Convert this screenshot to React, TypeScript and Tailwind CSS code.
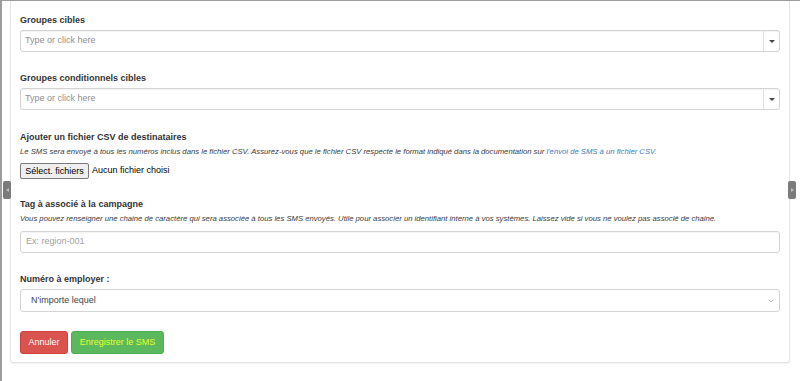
import { ChevronDown } from "lucide-react";

const font = { fontFamily: '"Liberation Sans", Arial, sans-serif' };

function Label({ children }: { children: React.ReactNode }) {
  return <div className="text-[9px] leading-[13px] font-bold text-[#333]">{children}</div>;
}

function TagInput() {
  return (
    <div className="mt-[3px] flex h-[22px] w-full rounded-[3px] border border-[#d4d4d4] bg-white shadow-[inset_0_1px_1px_rgba(0,0,0,0.05)]">
      <div className="flex flex-1 items-center pl-[4px] text-[9px] text-[#8f8f8f]">Type or click here</div>
      <div className="flex w-[16px] items-center justify-center border-l border-[#e0e0e0]">
        <div className="h-0 w-0 border-x-[3px] border-t-[3px] border-x-transparent border-t-[#444]" />
      </div>
    </div>
  );
}

export default function App() {
  return (
    <div style={font} className="relative h-[381px] w-[800px] overflow-hidden border-l-2 border-t border-[#9c9c9c] bg-white">
      <div className="ml-[8px] w-[780px] rounded-b-[3px] border-x border-b border-[#e4e4e4] bg-white px-[9px] pb-[8px] pt-[13px] shadow-[0_1px_1px_rgba(0,0,0,0.04)]">
        {/* Groupes cibles */}
        <Label>Groupes cibles</Label>
        <TagInput />

        {/* Groupes conditionnels */}
        <div className="mt-[20px]">
          <Label>Groupes conditionnels cibles</Label>
          <TagInput />
        </div>

        {/* CSV */}
        <div className="mt-[21px]">
          <Label>Ajouter un fichier CSV de destinataires</Label>
          <p className="mt-[2px] text-[7.7px] leading-[11px] italic text-[#3a3a3a]">
            Le SMS sera envoyé à tous les numéros inclus dans le fichier CSV. Assurez-vous que le fichier CSV respecte le format indiqué dans la documentation sur{" "}
            <span className="text-[#3a7cc0]">l'envoi de SMS à un fichier CSV.</span>
          </p>
          <div className="mt-[6px] flex items-center">
            <button className="h-[16px] w-[69px] rounded-[2px] border border-[#7a7a7a] bg-[#efefef] text-[9px] leading-[14px] text-black">
              Sélect. fichiers
            </button>
            <span className="ml-[3px] text-[9px] text-black">Aucun fichier choisi</span>
          </div>
        </div>

        {/* Tag */}
        <div className="mt-[19px]">
          <Label>Tag à associé à la campagne</Label>
          <p className="mt-[2px] text-[7.7px] leading-[11px] italic text-[#3a3a3a]">
            Vous pouvez renseigner une chaine de caractère qui sera associée à tous les SMS envoyés. Utile pour associer un identifiant interne à vos systèmes. Laissez vide si vous ne voulez pas associé de chaine.
          </p>
          <div className="mt-[7px] flex h-[22px] items-center rounded-[3px] border border-[#d4d4d4] pl-[5px] text-[9px] text-[#a0a0a0] shadow-[inset_0_1px_1px_rgba(0,0,0,0.05)]">
            Ex: region-001
          </div>
        </div>

        {/* Numéro */}
        <div className="mt-[20px]">
          <Label>Numéro à employer :</Label>
          <div className="mt-[3px] flex h-[23px] items-center justify-between rounded-[3px] border border-[#d4d4d4] pl-[10px] pr-[4px] text-[9px] text-[#444]">
            <span>N'importe lequel</span>
            <ChevronDown size={8} strokeWidth={1.5} className="text-[#777]" />
          </div>
        </div>

        {/* Buttons */}
        <div className="mt-[19px] flex gap-[3px]">
          <button className="h-[23px] w-[48px] rounded-[3px] border border-[#d43f3a] bg-[#d9534f] text-[9px] text-white">Annuler</button>
          <button className="h-[23px] w-[93px] rounded-[3px] border border-[#4cae4c] bg-[#5cb85c] text-[9px] text-[#e4ff2e]">Enregistrer le SMS</button>
        </div>
      </div>

      {/* side handles */}
      <div className="absolute left-[1px] top-[180px] flex h-[18px] w-[8px] items-center justify-center rounded-[2px] bg-[#7b7b7b]">
        <div className="h-0 w-0 border-y-[2.5px] border-r-[3px] border-y-transparent border-r-[#bdbdbd]" />
      </div>
      <div className="absolute left-[786px] top-[180px] flex h-[18px] w-[8px] items-center justify-center rounded-[2px] bg-[#7b7b7b]">
        <div className="h-0 w-0 border-y-[2.5px] border-l-[3px] border-y-transparent border-l-[#bdbdbd]" />
      </div>
    </div>
  );
}
